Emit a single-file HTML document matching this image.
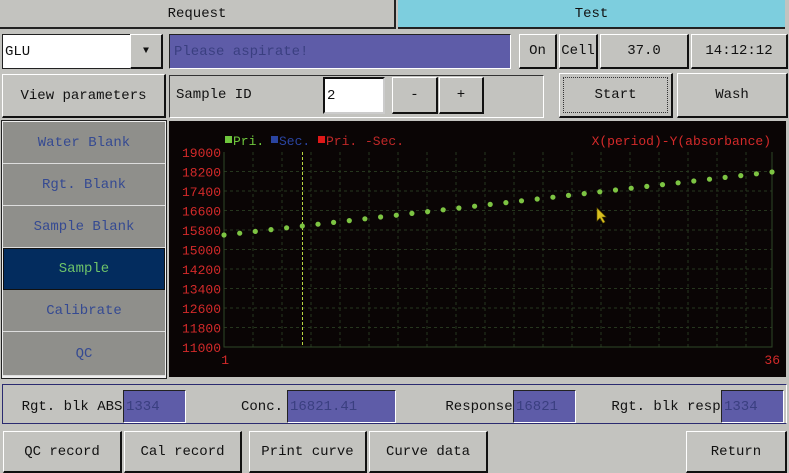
<!DOCTYPE html>
<html><head><meta charset="utf-8"><style>
*{margin:0;padding:0;box-sizing:border-box}
body{width:789px;height:470px;background:#c3c3bf;position:relative;overflow:hidden;font-family:"Liberation Mono","DejaVu Sans Mono",monospace;font-size:14px;color:#111}
.a{position:absolute;display:flex;align-items:center;justify-content:center;white-space:nowrap}
.btn{background:#c3c3bf;border:1px solid #fff;border-right:2px solid #111;border-bottom:2px solid #111}
.pur{background:#5e5ca8;color:#3a3f80;border:1px solid #222;border-right-color:#fff;border-bottom-color:#fff;justify-content:flex-start;padding-left:2px}
.li{background:#8f8f8b;color:#354a92;border-bottom:1px solid #ddd;left:3px;width:162px;height:42px}
</style></head><body>
<div class="a" style="left:0;top:0;width:396px;height:29px;border-bottom:2px solid #222;border-right:2px solid #222">Request</div>
<div class="a" style="left:398px;top:0;width:387px;height:29px;background:#7dcede;border-bottom:2px solid #222">Test</div>
<div style="position:absolute;left:785px;top:0;width:4px;height:470px;background:#c3c3bf"></div>

<div class="a" style="left:2px;top:34px;width:128px;height:35px;background:#fff;border:1px solid #222;border-right:none;justify-content:flex-start;padding-left:2px">GLU</div>
<div class="a btn" style="left:130px;top:34px;width:33px;height:35px;font-size:10px">▼</div>
<div class="a pur" style="left:169px;top:34px;width:342px;height:35px;padding-left:4px">Please aspirate!</div>
<div class="a btn" style="left:519px;top:34px;width:38px;height:35px">On</div>
<div class="a btn" style="left:559px;top:34px;width:39px;height:35px">Cell</div>
<div class="a btn" style="left:600px;top:34px;width:89px;height:35px">37.0</div>
<div class="a btn" style="left:691px;top:34px;width:97px;height:35px">14:12:12</div>

<div class="a btn" style="left:2px;top:74px;width:164px;height:44px">View parameters</div>
<div class="a" style="left:169px;top:75px;width:375px;height:43px;border:1px solid #333;border-right-color:#fff;border-bottom-color:#fff;justify-content:flex-start;padding-left:6px;align-items:flex-start;padding-top:11px">Sample ID</div>
<div class="a" style="left:323px;top:77px;width:62px;height:37px;background:#fff;border:2px solid #111;border-right-color:#ccc;border-bottom-color:#ccc;justify-content:flex-start;padding-left:2px">2</div>
<div class="a btn" style="left:392px;top:77px;width:46px;height:37px">-</div>
<div class="a btn" style="left:439px;top:77px;width:45px;height:37px">+</div>
<div class="a btn" style="left:559px;top:73px;width:114px;height:45px"><div class="a" style="position:absolute;left:3px;top:3px;right:3px;bottom:3px;border:1px dotted #333">Start</div></div>
<div class="a btn" style="left:677px;top:73px;width:111px;height:45px">Wash</div>

<div style="position:absolute;left:1px;top:120px;width:166px;height:259px;background:#eee;border:1px solid #222"></div>
<div class="a li" style="top:122px">Water Blank</div>
<div class="a li" style="top:164px">Rgt. Blank</div>
<div class="a li" style="top:206px">Sample Blank</div>
<div class="a li" style="top:248px;background:#032c5e;color:#6ec36a;border:1px solid #111">Sample</div>
<div class="a li" style="top:290px">Calibrate</div>
<div class="a li" style="top:332px;height:44px">QC</div>

<svg style="position:absolute;left:169px;top:121px" width="617" height="256" viewBox="169 121 617 256">
<rect x="169" y="121" width="617" height="256" fill="#0a0505"/>
<g stroke="#26361e" stroke-width="1" stroke-dasharray="3,3">
<path d="M224 171.5H772M224 191H772M224 210.5H772M224 230H772M224 249.5H772M224 269H772M224 288.5H772M224 308H772M224 327.5H772"/>
<path d="M253 152V347M282 152V347M311 152V347M340 152V347M369 152V347M398 152V347M427 152V347M456 152V347M485 152V347M514 152V347M543 152V347M572 152V347M601 152V347M630 152V347M659 152V347M688 152V347M717 152V347M746 152V347"/>
</g>
<path d="M224 152V347H772V152" fill="none" stroke="#2e4626" stroke-width="1"/>
<path d="M302.5 152V347" stroke="#b8d840" stroke-dasharray="3,2"/>
<g fill="#7dc443">
<circle cx="224" cy="235" r="2.6"/><circle cx="239.7" cy="233.2" r="2.6"/><circle cx="255.3" cy="231.4" r="2.6"/><circle cx="271" cy="229.6" r="2.6"/><circle cx="286.6" cy="227.8" r="2.6"/><circle cx="302.3" cy="226" r="2.6"/><circle cx="318" cy="224.2" r="2.6"/><circle cx="333.6" cy="222.4" r="2.6"/><circle cx="349.3" cy="220.6" r="2.6"/><circle cx="364.9" cy="218.8" r="2.6"/><circle cx="380.6" cy="217" r="2.6"/><circle cx="396.3" cy="215.2" r="2.6"/><circle cx="411.9" cy="213.4" r="2.6"/><circle cx="427.6" cy="211.6" r="2.6"/><circle cx="443.2" cy="209.8" r="2.6"/><circle cx="458.9" cy="208" r="2.6"/><circle cx="474.6" cy="206.2" r="2.6"/><circle cx="490.2" cy="204.4" r="2.6"/><circle cx="505.9" cy="202.6" r="2.6"/><circle cx="521.5" cy="200.8" r="2.6"/><circle cx="537.2" cy="199" r="2.6"/><circle cx="552.9" cy="197.2" r="2.6"/><circle cx="568.5" cy="195.4" r="2.6"/><circle cx="584.2" cy="193.6" r="2.6"/><circle cx="599.8" cy="191.8" r="2.6"/><circle cx="615.5" cy="190" r="2.6"/><circle cx="631.2" cy="188.2" r="2.6"/><circle cx="646.8" cy="186.4" r="2.6"/><circle cx="662.5" cy="184.6" r="2.6"/><circle cx="678.1" cy="182.8" r="2.6"/><circle cx="693.8" cy="181" r="2.6"/><circle cx="709.5" cy="179.2" r="2.6"/><circle cx="725.1" cy="177.4" r="2.6"/><circle cx="740.8" cy="175.6" r="2.6"/><circle cx="756.4" cy="173.8" r="2.6"/><circle cx="772" cy="172" r="2.6"/>
</g>
<g font-family="Liberation Mono, monospace" font-size="13" fill="#d42a2a" text-anchor="end">
<text x="221" y="157">19000</text><text x="221" y="176.5">18200</text><text x="221" y="196">17400</text><text x="221" y="215.5">16600</text><text x="221" y="235">15800</text><text x="221" y="254.5">15000</text><text x="221" y="274">14200</text><text x="221" y="293.5">13400</text><text x="221" y="313">12600</text><text x="221" y="332.5">11800</text><text x="221" y="352">11000</text>
<text x="229" y="364">1</text><text x="780" y="364">36</text>
<text x="771" y="145">X(period)-Y(absorbance)</text>
</g>
<g font-family="Liberation Mono, monospace" font-size="13">
<rect x="225" y="136" width="7" height="7" fill="#6ec63c"/><text x="233" y="145" fill="#6ec63c">Pri.</text>
<rect x="271" y="136" width="7" height="7" fill="#2a44a0"/><text x="279" y="145" fill="#2a44a0">Sec.</text>
<rect x="318" y="136" width="7" height="7" fill="#e01818"/><text x="326" y="145" fill="#c02828">Pri. -Sec.</text>
</g>
<path d="M597 208l0 13 3-3 3 5 2-1-3-5 4 0z" fill="#d8c020" stroke="#6a5a00" stroke-width="0.6"/>
</svg>

<div style="position:absolute;left:2px;top:384px;width:785px;height:40px;border:1px solid #2a2a70;border-right-color:#fff;border-bottom-color:#2a2a70"></div>
<div class="a" style="left:22px;top:390px;width:100px;height:33px">Rgt. blk ABS</div>
<div class="a pur" style="left:123px;top:390px;width:63px;height:33px">1334</div>
<div class="a" style="left:238px;top:390px;width:48px;height:33px">Conc.</div>
<div class="a pur" style="left:287px;top:390px;width:109px;height:33px">16821.41</div>
<div class="a" style="left:446px;top:390px;width:66px;height:33px">Response</div>
<div class="a pur" style="left:513px;top:390px;width:63px;height:33px">16821</div>
<div class="a" style="left:612px;top:390px;width:108px;height:33px">Rgt. blk resp</div>
<div class="a pur" style="left:721px;top:390px;width:63px;height:33px">1334</div>

<div class="a btn" style="left:3px;top:431px;width:119px;height:42px">QC record</div>
<div class="a btn" style="left:124px;top:431px;width:118px;height:42px">Cal record</div>
<div class="a btn" style="left:249px;top:431px;width:118px;height:42px">Print curve</div>
<div class="a btn" style="left:369px;top:431px;width:119px;height:42px">Curve data</div>
<div class="a btn" style="left:686px;top:431px;width:101px;height:42px">Return</div>
</body></html>
